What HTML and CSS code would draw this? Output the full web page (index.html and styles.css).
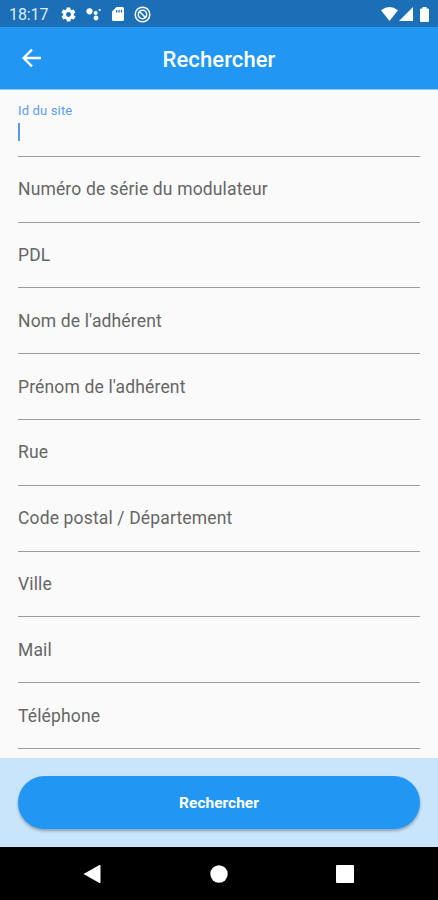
FILE: index.html
```html
<!DOCTYPE html>
<html lang="fr">
<head>
<meta charset="UTF-8">
<meta name="viewport" content="width=device-width, initial-scale=1.0">
<title>Rechercher</title>
<link rel="stylesheet" href="styles.css">
</head>
<body>
<div class="status-bar">
  <span class="time">18:17</span>
  <div class="status-left">
    <svg width="17" height="17" viewBox="0 0 24 24"><path d="M19.4 13c.1-.3.1-.6.1-1s0-.7-.1-1l2.1-1.600c.2-.2.3-.4.1-.6l-2-3.500c-.1-.2-.4-.3-.6-.2l-2.500 1c-.5-.4-1.100-.7-1.700-1l-.4-2.600c0-.3-.2-.5-.5-.5h-4c-.3 0-.5.2-.5.4l-.4 2.700c-.6.2-1.200.6-1.700 1l-2.500-1c-.2-.1-.5 0-.6.2l-2 3.500c-.1.2-.1.500.1.600L4.600 11c-.1.300-.1.700-.1 1s0 .7.100 1l-2.100 1.600c-.2.200-.3.400-.1.600l2 3.500c.1.200.4.300.6.200l2.500-1c.5.400 1.100.7 1.700 1l.4 2.700c0 .2.200.4.500.4h4c.3 0 .5-.2.500-.4l.4-2.700c.6-.2 1.200-.6 1.700-1l2.500 1c.2.100.5 0 .6-.2l2-3.500c.1-.2.1-.5-.1-.6zM12 15.500a3.500 3.500 0 1 1 0-7 3.500 3.500 0 0 1 0 7z" fill-rule="evenodd"/></svg>
    <svg width="16" height="16" viewBox="0 0 16 16"><circle cx="3.500" cy="5.300" r="3.100"/><circle cx="9.700" cy="7" r="2"/><circle cx="13.700" cy="4" r="1.100"/><circle cx="10" cy="12" r="2.400"/></svg>
    <svg width="12" height="16" viewBox="0 0 12 16"><path d="M4.500 1H10.500Q12 1 12 2.500V13.500Q12 15 10.500 15H1.500Q0 15 0 13.500V5.500zM4 4V6.500H5.300V4zM6.400 4V6.500H7.700V4zM8.800 4V6.500H10.100V4z" fill-rule="evenodd"/></svg>
    <svg class="outline" width="17" height="17" viewBox="0 0 17 17"><circle cx="8.500" cy="8.500" r="7.300"/><circle cx="8.500" cy="8.500" r="4.200"/><path d="M5.200 5.200L12 12"/></svg>
  </div>
  <div class="status-right">
    <svg width="17" height="14" viewBox="0 0 18 14" preserveAspectRatio="none"><path d="M0 3.300Q9-3.300 18 3.300L9 14z"/></svg>
    <svg width="14" height="14" viewBox="0 0 14 14"><path d="M14 0V14H0z"/></svg>
    <svg width="9" height="15" viewBox="0 0 9 15"><path d="M2.500 0H6.500V1.500H8Q9 1.500 9 2.500V14Q9 15 8 15H1Q0 15 0 14V2.500Q0 1.500 1 1.500H2.500z"/></svg>
  </div>
</div>

<header class="app-bar">
  <svg class="back" width="20" height="20" viewBox="0 0 20 20"><path d="M19 10H2.500M10 1.600L1.600 10L10 18.400"/></svg>
  <h1>Rechercher</h1>
</header>

<form class="search-form">
  <div class="field active">
    <label>Id du site</label>
    <span class="cursor"></span>
  </div>
  <div class="field"><label>Numéro de série du modulateur</label></div>
  <div class="field"><label>PDL</label></div>
  <div class="field"><label>Nom de l'adhérent</label></div>
  <div class="field"><label>Prénom de l'adhérent</label></div>
  <div class="field"><label>Rue</label></div>
  <div class="field"><label>Code postal / Département</label></div>
  <div class="field"><label>Ville</label></div>
  <div class="field"><label>Mail</label></div>
  <div class="field"><label>Téléphone</label></div>
</form>

<div class="bottom">
  <button type="button">Rechercher</button>
</div>

<nav class="nav-bar">
  <svg width="18" height="20" viewBox="0 0 18 20"><path d="M0.500 10L16 1.200Q17.500 .5 17.500 2V18Q17.500 19.500 16 18.800z"/></svg>
  <svg width="18" height="18" viewBox="0 0 18 18"><circle cx="9" cy="9" r="8.700"/></svg>
  <svg width="18" height="18" viewBox="0 0 18 18"><rect width="18" height="18" rx="1"/></svg>
</nav>
</body>
</html>
```

FILE: styles.css
```css
* {
  box-sizing: border-box;
}

body {
  margin: 0;
  height: 900px;
  display: flex;
  flex-direction: column;
  overflow: hidden;
  font-family: Roboto, sans-serif;
  background-color: #fafafa;
}

svg {
  display: block;
  fill: #fff;
}

.status-bar {
  height: 27px;
  flex: none;
  display: flex;
  align-items: center;
  padding: 1px 9px 0 9px;
  background-color: #1a6fb6;
  color: #dcecfa;
}

.time {
  width: 51px;
  font-size: 16px;
  letter-spacing: -0.1px;
}

.status-left {
  display: flex;
  align-items: center;
  gap: 9px;
}

.status-left svg:nth-child(3) {
  margin-left: 1px;
}

.status-left .outline {
  margin-left: 1px;
  fill: none;
  stroke: #fff;
  stroke-width: 1.5;
}

.status-right {
  display: flex;
  align-items: center;
  gap: 1px;
  margin-left: auto;
}

.status-right svg:last-child {
  margin-left: 6px;
}

.app-bar {
  height: 63px;
  flex: none;
  display: grid;
  grid-template-columns: 40px 1fr 40px;
  align-items: center;
  padding: 0 22px;
  background-color: #2196f3;
  border-bottom: 1px solid #90c8f8;
}

.back {
  fill: none;
  stroke: #fff;
  stroke-width: 2.4;
}

h1 {
  margin: 2px 0 0;
  text-align: center;
  font-size: 22px;
  font-weight: 500;
  letter-spacing: 0.1px;
  color: #fff;
}

.search-form {
  height: 668px;
  flex: none;
  padding: 1px 18px 0;
}

.field {
  height: 65.8px;
  display: flex;
  align-items: center;
  border-bottom: 1px solid #9c9c9c;
  font-size: 17.5px;
  letter-spacing: 0.15px;
  color: #666;
}

.field.active {
  flex-direction: column;
  align-items: flex-start;
  padding-top: 12px;
  font-size: 13px;
  color: #5a9ff0;
}

.cursor {
  width: 2px;
  height: 18px;
  margin-top: 5px;
  background-color: #5b98f5;
}

.bottom {
  height: 89px;
  flex: none;
  padding: 18px 18px 0;
  background-color: #c8e5fc;
}

button {
  display: block;
  width: 100%;
  height: 53px;
  border: none;
  border-radius: 27px;
  background-color: #2196f3;
  box-shadow: 0 2px 3px rgba(0, 0, 0, 0.3);
  font-family: inherit;
  font-size: 15.5px;
  font-weight: 700;
  color: #fff;
}

.nav-bar {
  flex: 1;
  display: flex;
  justify-content: space-between;
  align-items: center;
  padding: 0 84px 0 83px;
  background-color: #000;
}
```
